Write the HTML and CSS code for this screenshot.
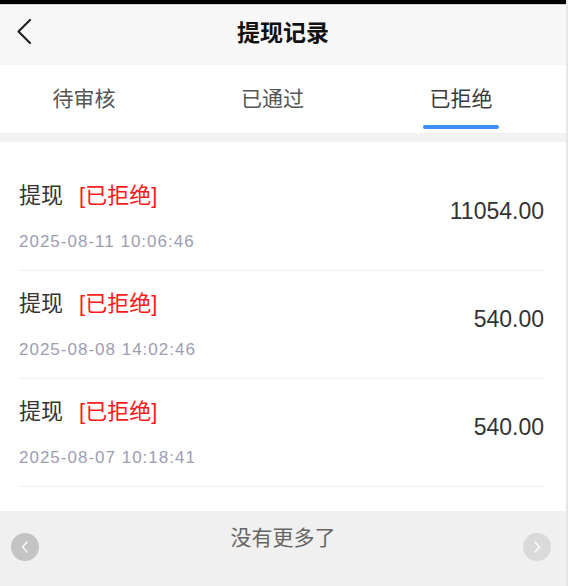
FILE: index.html
```html
<!DOCTYPE html>
<html lang="zh-CN">
<head>
    <meta charset="UTF-8">
    <meta name="viewport" content="width=device-width, initial-scale=1.0">
    <title>提现记录</title>
    <link rel="stylesheet" href="styles.css">
</head>
<body>
<div class="app">
    <div class="statusbar"></div>

    <div class="navbar">
        <div class="back">
            <svg width="16" height="27" viewBox="0 0 16 27">
                <path d="M14 2 L2.5 13.5 L14 25" fill="none" stroke="#222" stroke-width="2.2" stroke-linecap="round" stroke-linejoin="round"/>
            </svg>
        </div>
        <div class="title">提现记录</div>
        <div></div>
    </div>

    <div class="tabs">
        <div class="tab">待审核<span class="bar"></span></div>
        <div class="tab">已通过<span class="bar"></span></div>
        <div class="tab active">已拒绝<span class="bar"></span></div>
    </div>

    <div class="gap"></div>

    <div class="list">
        <div class="row">
            <div class="info">
                <div class="name">提现<span class="status">[已拒绝]</span></div>
                <div class="date">2025-08-11 10:06:46</div>
            </div>
            <div class="amount">11054.00</div>
        </div>
        <div class="row">
            <div class="info">
                <div class="name">提现<span class="status">[已拒绝]</span></div>
                <div class="date">2025-08-08 14:02:46</div>
            </div>
            <div class="amount">540.00</div>
        </div>
        <div class="row">
            <div class="info">
                <div class="name">提现<span class="status">[已拒绝]</span></div>
                <div class="date">2025-08-07 10:18:41</div>
            </div>
            <div class="amount">540.00</div>
        </div>
    </div>

    <div class="footer">
        <div class="nomore">没有更多了</div>
        <div class="arrow prev">
            <svg width="10" height="14" viewBox="0 0 10 14"><path d="M7 2 L2.5 7 L7 12" fill="none" stroke="#fff" stroke-width="1.3" stroke-linecap="round"/></svg>
        </div>
        <div class="arrow next">
            <svg width="10" height="14" viewBox="0 0 10 14"><path d="M3 2 L7.5 7 L3 12" fill="none" stroke="#fff" stroke-width="1.3" stroke-linecap="round"/></svg>
        </div>
    </div>
</div>
</body>
</html>
```

FILE: styles.css
```css
body {
    margin: 0;
    background: #e6e6e6;
    font-family: "Liberation Sans", "Noto Sans CJK SC", sans-serif;
    color: #333;
}
.app {
    width: 566px;
    height: 586px;
    background: #fff;
    display: flex;
    flex-direction: column;
}
.statusbar {
    height: 4px;
    background: #000;
    border-bottom: 1px solid #cfcfcf;
}

.navbar {
    height: 52px;
    padding-bottom: 8px;
    background: #f7f7f7;
    display: grid;
    grid-template-columns: 1fr auto 1fr;
    align-items: center;
}
.back {
    padding-left: 16px;
    display: flex;
}
.title {
    font-size: 23px;
    font-weight: bold;
    color: #111;
}

.tabs {
    display: flex;
    justify-content: space-between;
    padding: 0 67px 0 46px;
    height: 68px;
}
.tab {
    display: flex;
    flex-direction: column;
    align-items: center;
    padding-top: 19px;
    font-size: 21px;
    line-height: 30px;
    color: #555;
}
.tab .bar {
    width: 76px;
    height: 4px;
    margin-top: 11px;
    border-radius: 2px;
}
.tab.active {
    color: #3a3a3a;
}
.tab.active .bar {
    background: #3d8ff5;
}

.gap {
    height: 9px;
    background: #f2f2f2;
}

.list {
    padding: 21px 22px 24px 19px;
}
.row {
    display: flex;
    justify-content: space-between;
    padding: 18px 0 16px;
    border-bottom: 1px solid #f0f0f0;
}
.name {
    font-size: 22px;
    line-height: 30px;
    color: #333;
}
.status {
    color: #ff1a1a;
    margin-left: 16px;
}
.date {
    margin-top: 19px;
    font-size: 17px;
    line-height: 24px;
    letter-spacing: 1px;
    color: #9d9db2;
}
.amount {
    margin-top: 15px;
    font-size: 23px;
    line-height: 30px;
    color: #333;
}

.footer {
    flex: 1;
    background: #f0f0f0;
    position: relative;
    padding-top: 12px;
    text-align: center;
}
.nomore {
    font-size: 21px;
    line-height: 30px;
    color: #666;
}
.arrow {
    position: absolute;
    top: 22px;
    width: 28px;
    height: 28px;
    border-radius: 50%;
    display: flex;
    align-items: center;
    justify-content: center;
}
.arrow.prev {
    left: 11px;
    background: #c4c4c4;
}
.arrow.next {
    right: 15px;
    background: #dadada;
}
```
